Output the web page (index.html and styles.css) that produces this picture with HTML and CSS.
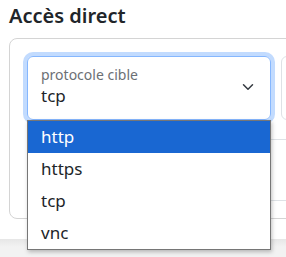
FILE: index.html
```html
<!DOCTYPE html>
<html lang="fr">
  <head>
    <meta charset="UTF-8" />
    <meta name="viewport" content="width=device-width, initial-scale=1.0" />
    <title>Accès direct</title>
    <link rel="stylesheet" href="styles.css">
  </head>
  <body>
    <div class="page">
      <h5 class="title">Accès direct</h5>
      <div class="card-wrap">
        <div class="card">
          <div class="row">
            <div class="floating focused">
              <span class="float-label">protocole cible</span>
              <span class="float-value">tcp</span>
              <svg class="chevron" width="16" height="16" viewBox="0 0 16 16">
                <path d="M2 5l6 6 6-6" fill="none" stroke="#343a40" stroke-width="2" stroke-linecap="round" stroke-linejoin="round"/>
              </svg>
            </div>
            <div class="floating other"></div>
          </div>
          <div class="second-row"></div>
        </div>
      </div>

      <!-- open select popup -->
      <ul class="options">
        <li class="selected">http</li>
        <li>https</li>
        <li>tcp</li>
        <li>vnc</li>
      </ul>
    </div>
    <div class="footer"></div>
  </body>
</html>
```

FILE: styles.css
```css
body {
  margin: 0;
  font-family: "Noto Sans", "Open Sans", sans-serif;
  color: #212529;
  background: #fff;
  overflow: hidden;
  width: 286px;
  height: 257px;
}
.page {
  position: relative;
  padding: 0 0 0 9px;
}
.title {
  margin: 0;
  padding-top: 3px;
  font-size: 20px;
  font-weight: 600;
  line-height: 26px;
  height: 35px;
}
.card-wrap {
  overflow: hidden;
}
.card {
  width: calc(100% + 20px);
  border: 1px solid #d4d4d4;
  border-radius: 8px;
  padding: 17px;
  box-sizing: border-box;
}
.row {
  display: flex;
  gap: 10px;
}
.floating {
  position: relative;
  height: 64px;
  border: 1px solid #dee2e6;
  border-radius: 6px;
  box-sizing: border-box;
  flex: none;
}
.focused {
  width: 244px;
  border-color: #86b7fe;
  box-shadow: 0 0 0 4px #c2dbfe;
  padding: 9px 0 0 13px;
}
.other {
  width: 20px;
}
.float-label {
  display: block;
  font-size: 14px;
  line-height: 18px;
  color: #6c7075;
}
.float-value {
  display: block;
  font-size: 17px;
  line-height: 24px;
}
.chevron {
  position: absolute;
  right: 16px;
  top: 24px;
  width: 12px;
  height: 12px;
}
.second-row {
  margin-top: 19px;
  height: 60px;
  border-top: 1px solid #dee2e6;
  border-bottom: 1px solid #dee2e6;
}
.options {
  position: absolute;
  top: 120px;
  left: 27px;
  width: 244px;
  margin: 0;
  padding: 0;
  list-style: none;
  background: #fff;
  border: 1px solid #767676;
  box-sizing: border-box;
  box-shadow: 1px 2px 4px rgba(0, 0, 0, 0.25);
  z-index: 2;
}
.options li {
  height: 32px;
  line-height: 32px;
  padding-left: 13px;
  font-size: 17px;
}
.options .selected {
  background: #1967d2;
  color: #fff;
}
.footer {
  margin-top: 20px;
  height: 30px;
  background: linear-gradient(#e6e6e6, #f2f2f2 8px);
}
```
